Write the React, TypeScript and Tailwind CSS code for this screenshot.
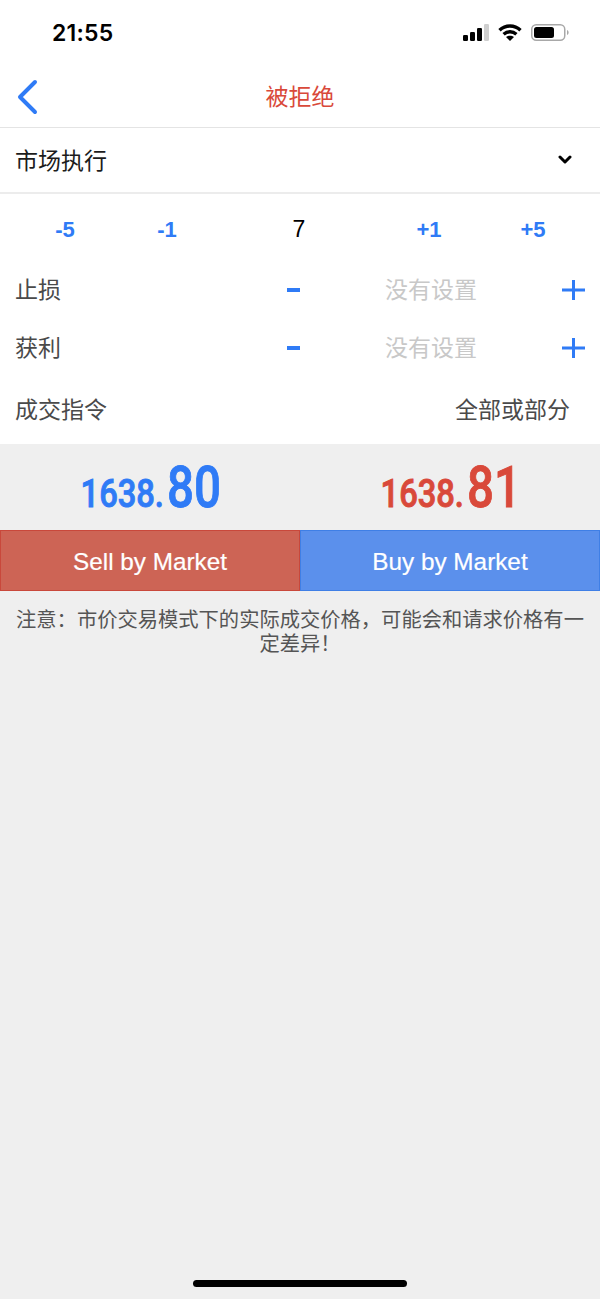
const cjk = "font-['Liberation_Sans','Noto_Sans_CJK_SC',sans-serif]"

function StatusBar() {
  return (
    <div className="flex h-[70px] items-start justify-between pl-[52px] pr-[31px]">
      <span className="mt-[19px] font-['Inter',sans-serif] text-[23px] leading-[28px] font-semibold tracking-[0.2px] text-black">21:55</span>
      <div className="mt-[24px] flex items-center">
        <svg width="27" height="17" viewBox="0 0 27 17">
          <rect x="1" y="11" width="5" height="6" rx="1.2" fill="#000" />
          <rect x="8" y="8" width="5" height="9" rx="1.2" fill="#000" />
          <rect x="15" y="4" width="5" height="13" rx="1.2" fill="#000" />
          <rect x="22" y="0" width="5" height="17" rx="1.2" fill="#cfcfcf" />
        </svg>
        <svg className="ml-[9px]" width="24" height="17" viewBox="0 0 24 17" fill="none">
          <path d="M1.5 6.2C7.4 .6 16.6 .6 22.5 6.2" stroke="#000" strokeWidth="3.4" />
          <path d="M5.6 10.2C9.3 6.9 14.7 6.9 18.4 10.2" stroke="#000" strokeWidth="3.4" />
          <path d="M12 17L8 13C10.3 11.2 13.7 11.2 16 13Z" fill="#000" />
        </svg>
        <svg className="ml-[9px]" width="38" height="17" viewBox="0 0 38 17" fill="none">
          <rect x=".75" y=".75" width="33" height="15.5" rx="4.5" stroke="#a8a8a8" strokeWidth="1.5" />
          <rect x="3" y="3" width="20" height="11" rx="2.5" fill="#000" />
          <path d="M36 6C37.2 6.4 37.6 7.4 37.6 8.5S37.2 10.6 36 11Z" fill="#a8a8a8" />
        </svg>
      </div>
    </div>
  )
}

function StepRow({ label }: { label: string }) {
  return (
    <div className="grid h-[58px] grid-cols-[264px_58px_218px_60px] items-center">
      <span className="pl-[15px] text-[23px] text-[#4a4a4a]">{label}</span>
      <div className="flex justify-center">
        <div className="mt-[-1px] h-[4px] w-[13px] bg-[#2f7bf6]" />
      </div>
      <span className="text-center text-[23px] text-[#c8c8c8]">没有设置</span>
      <div className="flex justify-end pr-[15px]">
        <svg width="24" height="24" viewBox="0 0 24 24">
          <path d="M1 12H24M12.5 2V22" stroke="#2f7bf6" strokeWidth="3" />
        </svg>
      </div>
    </div>
  )
}

function Price({ small, big, color }: { small: string; big: string; color: string }) {
  return (
    <div className={`flex items-baseline justify-center gap-[3px] font-['Roboto',sans-serif] font-medium [-webkit-text-stroke:0.9px_currentColor] ${color}`}>
      <span className="inline-block origin-right scale-x-[0.86] text-[38px] leading-none">{small}</span>
      <span className="inline-block origin-left scale-x-[0.82] text-[58px] leading-none">{big}</span>
    </div>
  )
}

export default function App() {
  return (
    <div className={`flex h-[1299px] w-[600px] flex-col overflow-hidden bg-[#efefef] ${cjk}`}>
      <div className="bg-white">
        <StatusBar />

        {/* nav */}
        <div className="relative flex h-[58px] items-center justify-center border-b border-[#e4e4e4]">
          <svg className="absolute left-[16px] top-[9px]" width="24" height="36" viewBox="0 0 24 36" fill="none">
            <path d="M19 3L4 18L19 33" stroke="#2f7bf6" strokeWidth="4" strokeLinecap="round" strokeLinejoin="round" />
          </svg>
          <span className="mt-[-3px] text-[23px] text-[#d9493a]">被拒绝</span>
        </div>

        {/* order type */}
        <div className="flex h-[66px] items-center justify-between border-b-2 border-[#ececec] pl-[15px] pr-[28px]">
          <span className="pt-[2px] text-[23px] text-[#1c1c1c]">市场执行</span>
          <svg width="14" height="10" viewBox="0 0 14 10" fill="none">
            <path d="M2 2L7 7L12 2" stroke="#000" strokeWidth="3" strokeLinecap="round" strokeLinejoin="round" />
          </svg>
        </div>

        {/* lots stepper */}
        <div className="grid h-[67px] grid-cols-[130px_74px_190px_70px_136px] items-center pt-[3px] text-center text-[#2f7bf6]">
          <span className="text-[22px] font-bold">-5</span>
          <span className="text-[22px] font-bold">-1</span>
          <span className="text-[23px] text-black">7</span>
          <span className="text-[22px] font-bold">+1</span>
          <span className="pl-[2px] text-[22px] font-bold">+5</span>
        </div>

        <StepRow label="止损" />
        <StepRow label="获利" />

        <div className="flex h-[67px] items-center justify-between pl-[15px] pr-[30px] text-[23px] text-[#4a4a4a]">
          <span>成交指令</span>
          <span>全部或部分</span>
        </div>
      </div>

      {/* prices */}
      <div className="grid h-[86px] grid-cols-2 items-center">
        <Price small="1638." big="80" color="text-[#2f7bf6]" />
        <Price small="1638." big="81" color="text-[#d9493a]" />
      </div>

      <div className="grid h-[61px] grid-cols-2 text-[24.3px] text-white [-webkit-text-stroke:0.2px_white]">
        <button className="border border-[#c9483b] bg-[#cd6455] pt-[3px]">Sell by Market</button>
        <button className="border border-[#3f7fe6] bg-[#5b90ec] pt-[3px]">Buy by Market</button>
      </div>

      <p className="px-[15px] pt-[17px] text-center text-[20.3px] leading-[24px] text-[#555555]">
        {"注意\uFF1A市价交易模式下的实际成交价格\uFF0C可能会和请求价格有一定差异\uFF01"}
      </p>

      {/* home indicator */}
      <div className="mt-auto mb-[12px] h-[7px] w-[214px] self-center rounded-full bg-black" />
    </div>
  )
}
